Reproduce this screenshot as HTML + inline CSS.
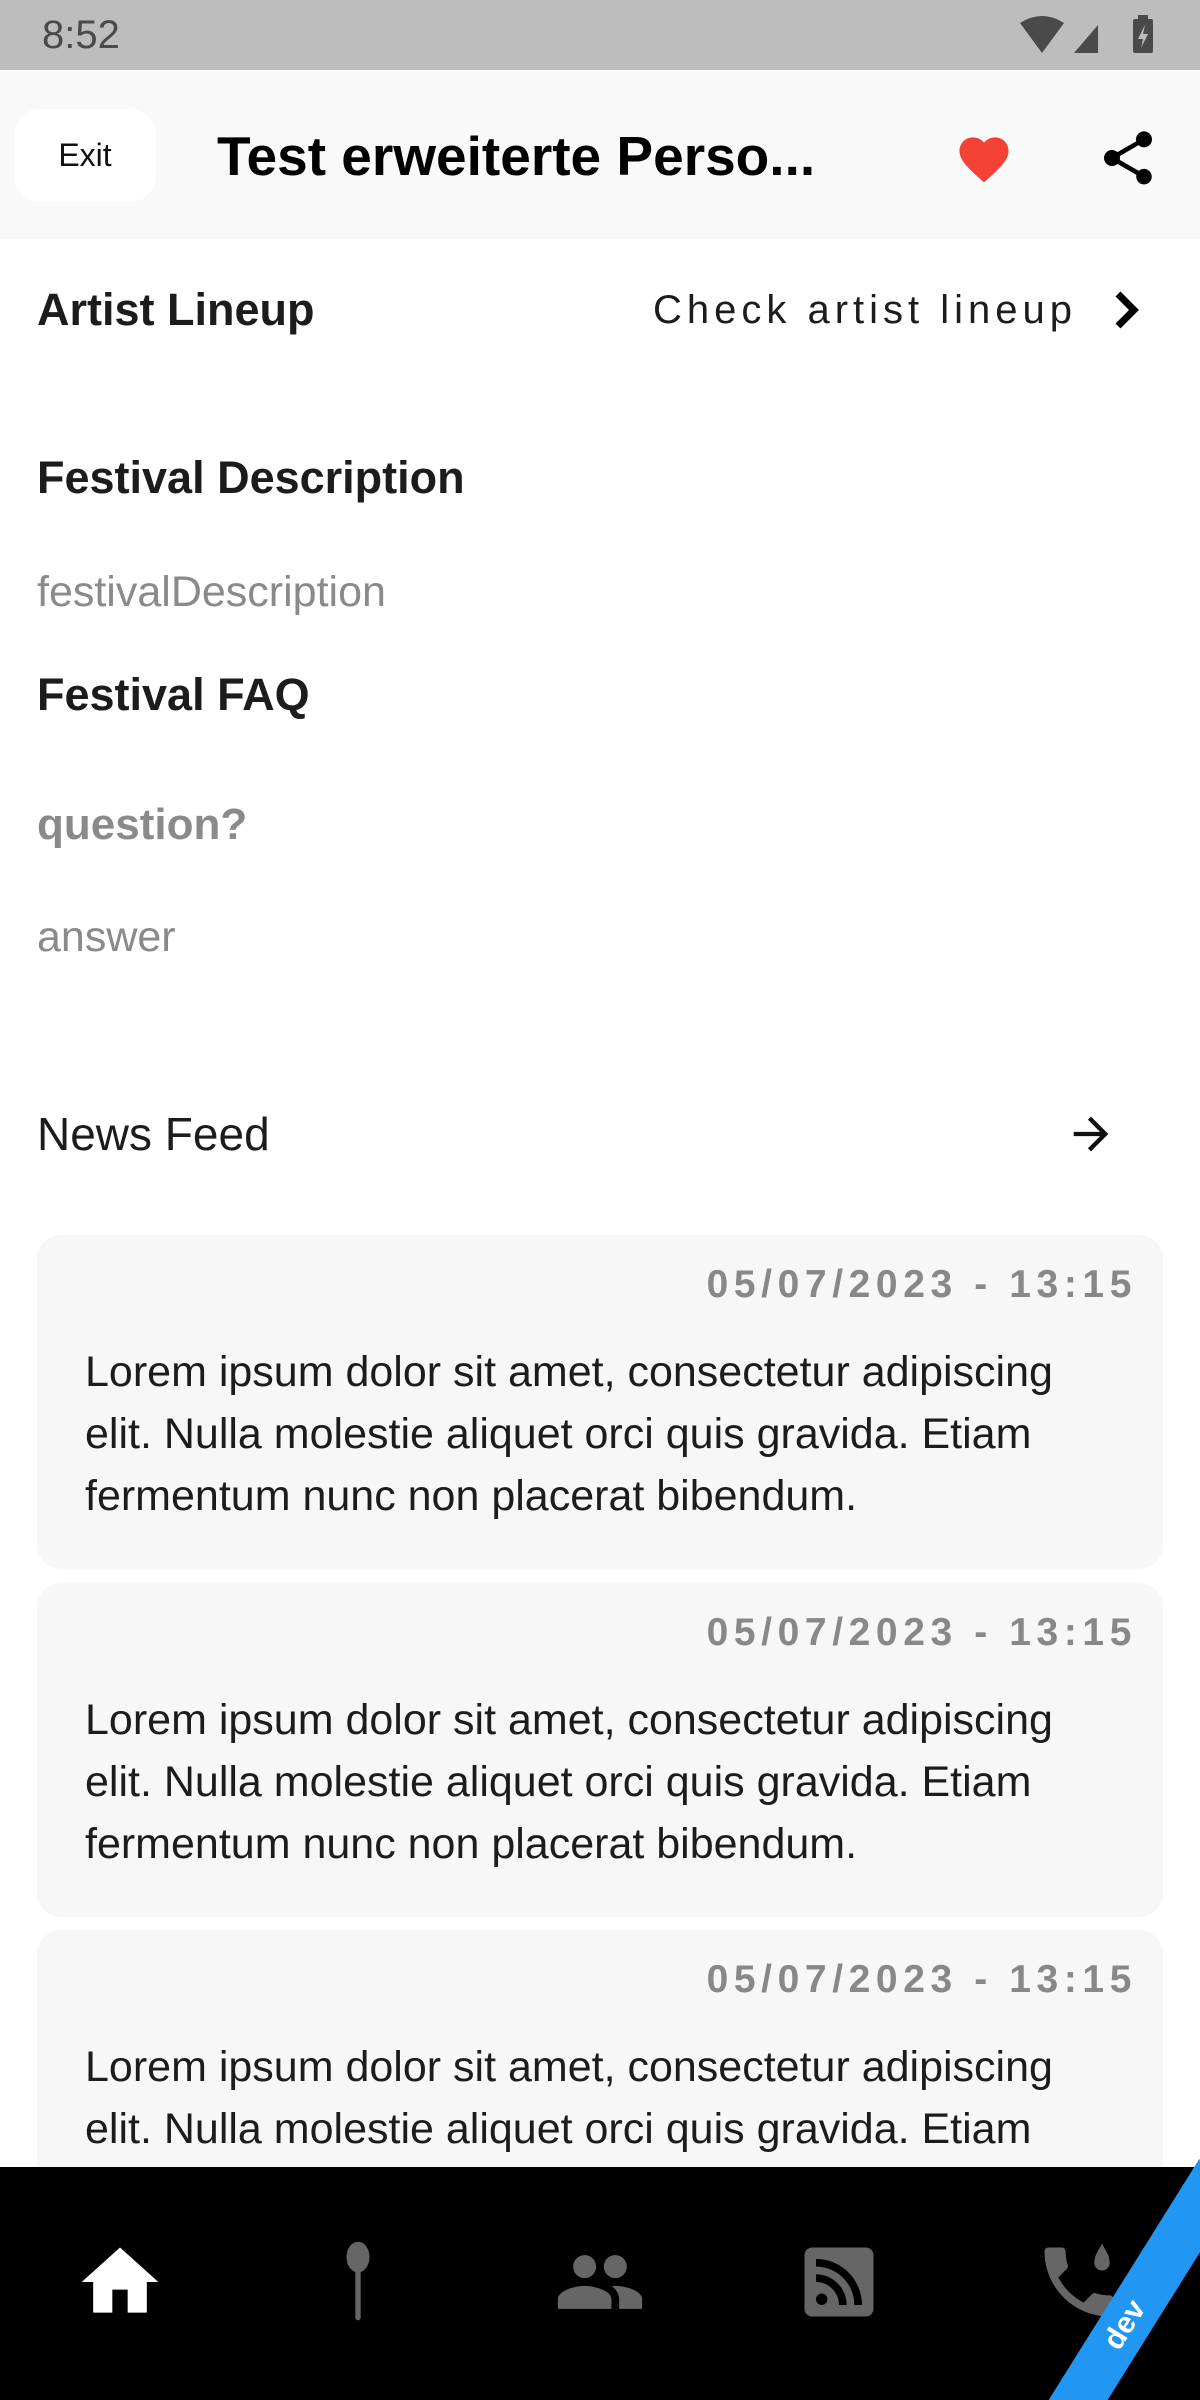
<!DOCTYPE html>
<html style="overflow:hidden;height:2400px"><head><meta charset="utf-8"><style>
*{margin:0;padding:0;box-sizing:border-box}
html,body{width:1200px;height:2400px;overflow:hidden}
body{background:#fff;font-family:"Liberation Sans",sans-serif;color:#1c1c1c}
#w{position:relative;width:1200px;height:2400px;overflow:hidden}
.a{position:absolute;white-space:nowrap}
.card{position:absolute;left:37px;width:1126px;height:334px;background:#f7f7f7;border-radius:24px}
.date{position:absolute;right:26px;top:28px;font-size:39px;font-weight:bold;color:#888;letter-spacing:5.6px}
.body{position:absolute;left:48px;top:106px;font-size:43px;line-height:62px;color:#1c1c1c;width:1010px;white-space:normal}
</style></head><body><div id="w">
<div class="a" style="left:0;top:0;width:1200px;height:70px;background:#bdbdbd"></div>
<div class="a" style="left:42px;top:13px;font-size:40px;color:#4a4a4a">8:52</div>
<svg class="a" style="left:1020px;top:15px" width="145" height="42" viewBox="0 0 145 42">
<path d="M0 8 Q22 -6 44 8 L22 38 Z" fill="#4a4a4a"/>
<path d="M54 38 L78 10 L78 38 Z" fill="#4a4a4a"/>
<rect x="113" y="4" width="20" height="34" rx="2" fill="#4a4a4a"/><rect x="118" y="0" width="10" height="5" fill="#4a4a4a"/>
<path d="M125 10 L118 24 L123 24 L121 33 L128 19 L123 19 Z" fill="#bdbdbd"/>
</svg>
<div class="a" style="left:0;top:70px;width:1200px;height:169px;background:#f9f9f9"></div>
<div class="a" style="left:14px;top:109px;width:142px;height:93px;background:#fff;border-radius:26px;font-size:32px;text-align:center;line-height:93px;color:#111">Exit</div>
<div class="a" style="left:217px;top:124px;font-size:55px;font-weight:bold;color:#000">Test erweiterte Perso...</div>
<svg class="a" style="left:954px;top:130px" width="60" height="54" viewBox="0 0 24 22"><path d="M12 21.35l-1.45-1.32C5.4 15.36 2 12.28 2 8.5 2 5.42 4.42 3 7.5 3c1.74 0 3.41.81 4.5 2.09C13.09 3.81 14.76 3 16.5 3 19.58 3 22 5.42 22 8.5c0 3.78-3.4 6.86-8.55 11.54L12 21.35z" fill="#f44336"/></svg>
<svg class="a" style="left:1096px;top:126px" width="64" height="64" viewBox="0 0 24 24"><path d="M18 16.08c-.76 0-1.44.3-1.96.77L8.91 12.7c.05-.23.09-.46.09-.7s-.04-.47-.09-.7l7.05-4.11c.54.5 1.25.81 2.04.81 1.66 0 3-1.34 3-3s-1.34-3-3-3-3 1.34-3 3c0 .24.04.47.09.7L8.04 9.81C7.5 9.31 6.79 9 6 9c-1.66 0-3 1.34-3 3s1.34 3 3 3c.79 0 1.5-.31 2.04-.81l7.12 4.16c-.05.21-.08.43-.08.65 0 1.61 1.31 2.92 2.92 2.92 1.61 0 2.92-1.31 2.92-2.92s-1.31-2.92-2.92-2.92z" fill="#000"/></svg>
<div class="a" style="left:37px;top:284px;font-size:45px;font-weight:bold">Artist Lineup</div>
<div class="a" style="left:653px;top:288px;font-size:40px;font-weight:500;letter-spacing:5px">Check artist lineup</div>
<svg class="a" style="left:1108px;top:288px" width="36" height="44" viewBox="0 0 36 44"><path d="M10 6 L26 22 L10 38" fill="none" stroke="#000" stroke-width="7"/></svg>
<div class="a" style="left:37px;top:452px;font-size:45px;font-weight:bold">Festival Description</div>
<div class="a" style="left:37px;top:568px;font-size:43px;color:#8a8a8a">festivalDescription</div>
<div class="a" style="left:37px;top:669px;font-size:45px;font-weight:bold">Festival FAQ</div>
<div class="a" style="left:37px;top:800px;font-size:44px;font-weight:bold;color:#8a8a8a">question?</div>
<div class="a" style="left:37px;top:913px;font-size:43px;color:#8a8a8a">answer</div>
<div class="a" style="left:37px;top:1107px;font-size:46px">News Feed</div>
<svg class="a" style="left:1064px;top:1108px" width="54" height="52" viewBox="0 0 24 24"><path d="M12 4l-1.41 1.41L16.17 11H4v2h12.17l-5.58 5.59L12 20l8-8z" fill="#111"/></svg>
<div class="card" style="top:1235px"><div class="date">05/07/2023 - 13:15</div><div class="body">Lorem ipsum dolor sit amet, consectetur adipiscing elit. Nulla molestie aliquet orci quis gravida. Etiam fermentum nunc non placerat bibendum.</div></div>
<div class="card" style="top:1583px"><div class="date">05/07/2023 - 13:15</div><div class="body">Lorem ipsum dolor sit amet, consectetur adipiscing elit. Nulla molestie aliquet orci quis gravida. Etiam fermentum nunc non placerat bibendum.</div></div>
<div class="card" style="top:1930px"><div class="date">05/07/2023 - 13:15</div><div class="body">Lorem ipsum dolor sit amet, consectetur adipiscing elit. Nulla molestie aliquet orci quis gravida. Etiam fermentum nunc non placerat bibendum.</div></div>
<div class="a" style="left:0;top:2167px;width:1200px;height:233px;background:#000"></div>
<svg class="a" style="left:74px;top:2236px" width="92" height="92" viewBox="0 0 24 24"><path d="M10 20v-6h4v6h5v-8h3L12 3 2 12h3v8z" fill="#fff"/></svg>
<svg class="a" style="left:312px;top:2236px" width="92" height="92" viewBox="0 0 24 24"><ellipse cx="12" cy="5.5" rx="3" ry="4" fill="#666"/><rect x="11.3" y="8" width="1.4" height="14" rx=".7" fill="#666"/></svg>
<svg class="a" style="left:554px;top:2236px" width="92" height="92" viewBox="0 0 24 24"><path d="M16 11c1.66 0 2.99-1.34 2.99-3S17.66 5 16 5c-1.66 0-3 1.34-3 3s1.34 3 3 3zm-8 0c1.66 0 2.99-1.34 2.99-3S9.66 5 8 5C6.34 5 5 6.34 5 8s1.34 3 3 3zm0 2c-2.33 0-7 1.17-7 3.5V19h14v-2.5c0-2.33-4.67-3.5-7-3.5zm8 0c-.29 0-.62.02-.97.05 1.16.84 1.97 1.97 1.97 3.45V19h6v-2.5c0-2.33-4.67-3.5-7-3.5z" fill="#666"/></svg>
<svg class="a" style="left:793px;top:2236px" width="92" height="92" viewBox="0 0 24 24"><path d="M19 3H5c-1.1 0-2 .9-2 2v14c0 1.1.9 2 2 2h14c1.1 0 2-.9 2-2V5c0-1.1-.9-2-2-2zM7.5 18c-.83 0-1.5-.67-1.5-1.5S6.67 15 7.5 15s1.5.67 1.5 1.5S8.33 18 7.5 18zm4.5 0c0-3.31-2.69-6-6-6v-2c4.42 0 8 3.58 8 8h-2zm4 0c0-5.52-4.48-10-10-10V6c6.63 0 12 5.37 12 12h-2z" fill="#666"/></svg>
<svg class="a" style="left:1033px;top:2236px" width="92" height="92" viewBox="0 0 24 24"><path d="M20 15.5c-1.25 0-2.45-.2-3.57-.57-.35-.11-.74-.03-1.02.24l-2.2 2.2c-2.83-1.44-5.14-3.76-6.59-6.59l2.2-2.21c.28-.26.36-.65.25-1C8.7 6.45 8.5 5.25 8.5 4c0-.55-.45-1-1-1H4c-.55 0-1 .45-1 1 0 9.39 7.61 17 17 17 .55 0 1-.45 1-1v-3.5c0-.55-.45-1-1-1z" fill="#666"/><path d="M18 2c-1 2-2 3-2 5a2 2 0 0 0 4 0c0-2-1-3-2-5z" fill="#666"/></svg>
<div class="a" style="width:360px;height:50px;background:#2196f3;transform:rotate(-58deg);transform-origin:center;color:#fff;font-weight:bold;font-size:30px;line-height:50px;text-align:center;left:945px;top:2300px">dev</div>
</div></body></html>
